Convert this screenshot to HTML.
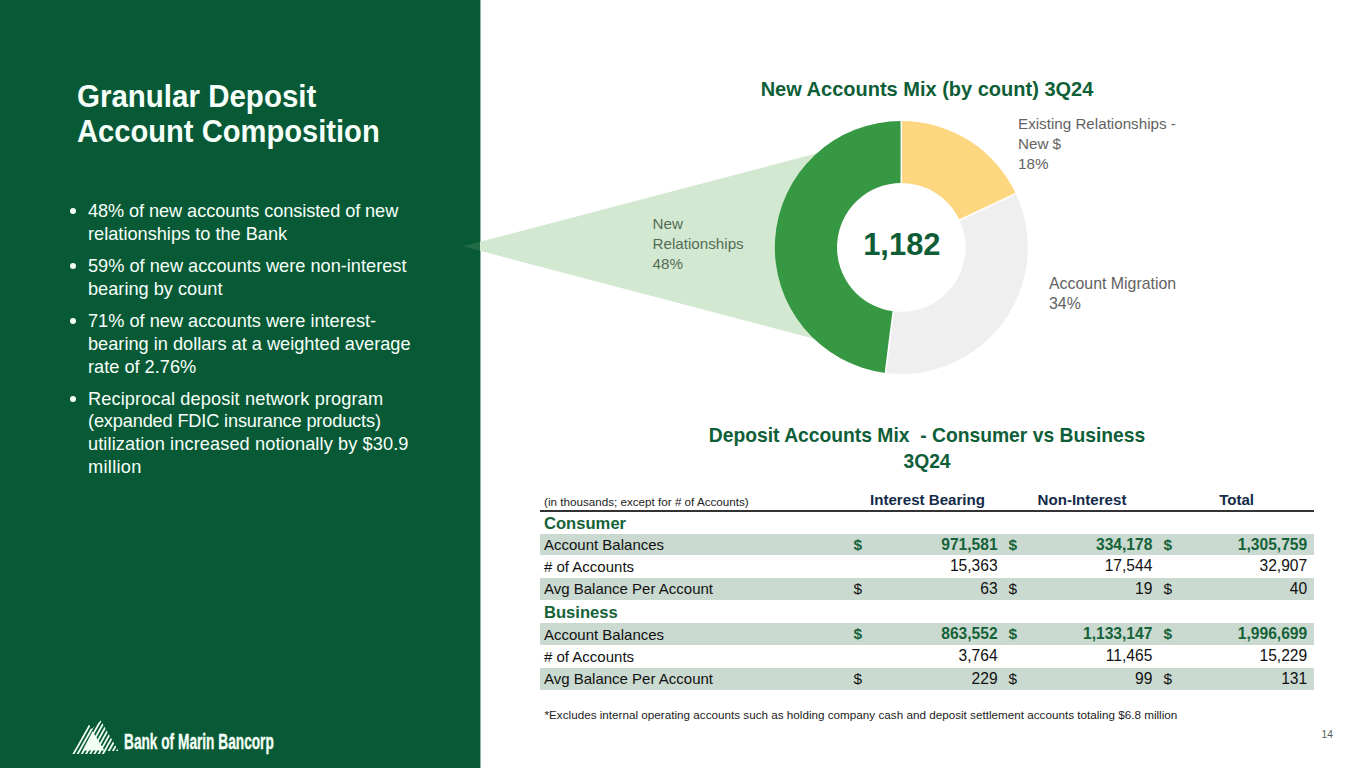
<!DOCTYPE html>
<html><head><meta charset="utf-8"><style>
html,body{margin:0;padding:0;}
body{width:1365px;height:768px;position:relative;overflow:hidden;background:#fff;font-family:"Liberation Sans",sans-serif;}
.t{position:absolute;white-space:nowrap;}
.abs{position:absolute;}
.panel{position:absolute;left:0;top:0;width:480px;height:768px;background:#085A36;}
.dot{position:absolute;width:6px;height:6px;border-radius:50%;background:#F7FFFA;}
.band{position:absolute;left:540px;width:774px;background:#CADAD0;}
.hline{position:absolute;left:540px;width:774px;top:510px;height:2px;background:#333;}
</style></head><body>
<div class="panel"></div><div style="position:absolute;left:480px;top:0;width:1px;height:768px;background:#085A36;opacity:0.45"></div><svg class="abs" width="1365" height="768" viewBox="0 0 1365 768" style="left:0;top:0">
<polygon points="480,241.83 835,148.46 835,344.14 480,250.77" fill="#D3E8D1"/>
<polygon points="463.0,246.3 480,241.83 480,250.77" fill="#D3E8D1" fill-opacity="0.12"/>
<path d="M901.30,120.90 A126.5,126.5 0 0 1 1015.76,193.54 L959.48,220.02 A64.3,64.3 0 0 0 901.30,183.10 Z" fill="#FDD680"/>
<path d="M1015.76,193.54 A126.5,126.5 0 0 1 885.45,372.90 L893.24,311.19 A64.3,64.3 0 0 0 959.48,220.02 Z" fill="#EFEFEF"/>
<path d="M885.45,372.90 A126.5,126.5 0 0 1 901.30,120.90 L901.30,183.10 A64.3,64.3 0 0 0 893.24,311.19 Z" fill="#369843"/>
<line x1="901.30" y1="184.10" x2="901.30" y2="119.90" stroke="#fff" stroke-width="1.5"/><line x1="958.58" y1="220.45" x2="1016.67" y2="193.11" stroke="#fff" stroke-width="1.5"/><line x1="893.37" y1="310.20" x2="885.32" y2="373.89" stroke="#fff" stroke-width="1.5"/>
</svg><div class="band" style="top:533.5px;height:21.5px"></div><div class="band" style="top:578px;height:22px"></div><div class="band" style="top:623px;height:22px"></div><div class="band" style="top:668px;height:21.5px"></div><div class="hline"></div>
<div class="t" style="left:77.00px;top:82.03px;font-size:29.5px;line-height:29.5px;color:#F7FFFA;font-weight:700;transform-origin:0 24.97px;transform:scaleY(1.08);">Granular Deposit</div><div class="t" style="left:77.00px;top:117.92px;font-size:29.15px;line-height:29.15px;color:#F7FFFA;font-weight:700;transform-origin:0 24.68px;transform:scaleY(1.07);">Account Composition</div><div class="dot" style="left:70.30px;top:208.40px"></div><div class="t" style="left:88.00px;top:202.29px;font-size:18.2px;line-height:18.2px;color:#F7FFFA;font-weight:400;letter-spacing:-0.09px;">48% of new accounts consisted of new</div><div class="t" style="left:88.00px;top:225.19px;font-size:18.2px;line-height:18.2px;color:#F7FFFA;font-weight:400;">relationships to the Bank</div><div class="dot" style="left:70.30px;top:263.20px"></div><div class="t" style="left:88.00px;top:257.09px;font-size:18.2px;line-height:18.2px;color:#F7FFFA;font-weight:400;">59% of new accounts were non-interest</div><div class="t" style="left:88.00px;top:279.99px;font-size:18.2px;line-height:18.2px;color:#F7FFFA;font-weight:400;">bearing by count</div><div class="dot" style="left:70.30px;top:318.00px"></div><div class="t" style="left:88.00px;top:311.89px;font-size:18.2px;line-height:18.2px;color:#F7FFFA;font-weight:400;">71% of new accounts were interest-</div><div class="t" style="left:88.00px;top:334.79px;font-size:18.2px;line-height:18.2px;color:#F7FFFA;font-weight:400;">bearing in dollars at a weighted average</div><div class="t" style="left:88.00px;top:357.69px;font-size:18.2px;line-height:18.2px;color:#F7FFFA;font-weight:400;">rate of 2.76%</div><div class="dot" style="left:70.30px;top:395.70px"></div><div class="t" style="left:88.00px;top:389.59px;font-size:18.2px;line-height:18.2px;color:#F7FFFA;font-weight:400;letter-spacing:0.12px;">Reciprocal deposit network program</div><div class="t" style="left:88.00px;top:412.49px;font-size:18.2px;line-height:18.2px;color:#F7FFFA;font-weight:400;letter-spacing:-0.16px;">(expanded FDIC insurance products)</div><div class="t" style="left:88.00px;top:435.39px;font-size:18.2px;line-height:18.2px;color:#F7FFFA;font-weight:400;letter-spacing:0.1px;">utilization increased notionally by $30.9</div><div class="t" style="left:88.00px;top:458.29px;font-size:18.2px;line-height:18.2px;color:#F7FFFA;font-weight:400;letter-spacing:0.3px;">million</div><div class="t" style="left:527.00px;width:800px;text-align:center;top:78.87px;font-size:20px;line-height:20.0px;color:#0E5E37;font-weight:700;transform-origin:0 16.93px;transform:scaleY(1.04);">New Accounts Mix (by count) 3Q24</div><div class="t" style="left:1018.00px;top:115.53px;font-size:15.2px;line-height:15.2px;color:#626262;font-weight:400;">Existing Relationships -</div><div class="t" style="left:1018.00px;top:135.83px;font-size:15.2px;line-height:15.2px;color:#626262;font-weight:400;">New $</div><div class="t" style="left:1018.00px;top:156.43px;font-size:15.2px;line-height:15.2px;color:#626262;font-weight:400;">18%</div><div class="t" style="left:652.50px;top:215.53px;font-size:15.2px;line-height:15.2px;color:#536D54;font-weight:400;">New</div><div class="t" style="left:652.50px;top:235.93px;font-size:15.2px;line-height:15.2px;color:#536D54;font-weight:400;">Relationships</div><div class="t" style="left:652.50px;top:256.43px;font-size:15.2px;line-height:15.2px;color:#536D54;font-weight:400;">48%</div><div class="t" style="left:1049.00px;top:275.54px;font-size:15.9px;line-height:15.9px;color:#626262;font-weight:400;">Account Migration</div><div class="t" style="left:1049.00px;top:296.04px;font-size:15.9px;line-height:15.9px;color:#626262;font-weight:400;">34%</div><div class="t" style="left:863.20px;top:229.54px;font-size:30.9px;line-height:30.9px;color:#0E5D37;font-weight:700;">1,182</div><div class="t" style="left:527.00px;width:800px;text-align:center;top:425.66px;font-size:19.3px;line-height:19.3px;color:#0E5E37;font-weight:700;">Deposit Accounts Mix&nbsp; - Consumer vs Business</div><div class="t" style="left:527.00px;width:800px;text-align:center;top:452.26px;font-size:19.3px;line-height:19.3px;color:#0E5E37;font-weight:700;">3Q24</div><div class="t" style="left:544.00px;top:495.62px;font-size:11.67px;line-height:11.67px;color:#222;font-weight:400;">(in thousands; except for # of Accounts)</div><div class="t" style="left:527.50px;width:800px;text-align:center;top:491.82px;font-size:15.1px;line-height:15.1px;color:#142B4A;font-weight:700;">Interest Bearing</div><div class="t" style="left:682.00px;width:800px;text-align:center;top:491.82px;font-size:15.1px;line-height:15.1px;color:#142B4A;font-weight:700;">Non-Interest</div><div class="t" style="left:836.60px;width:800px;text-align:center;top:491.82px;font-size:15.1px;line-height:15.1px;color:#142B4A;font-weight:700;">Total</div><div class="t" style="left:544.00px;top:515.85px;font-size:16.6px;line-height:16.6px;color:#156239;font-weight:700;">Consumer</div><div class="t" style="left:544.00px;top:605.15px;font-size:16.6px;line-height:16.6px;color:#156239;font-weight:700;">Business</div><div class="t" style="left:544.00px;top:537.10px;font-size:15px;line-height:15.0px;color:#111;font-weight:400;">Account Balances</div><div class="t" style="left:853.50px;top:536.76px;font-size:15.4px;line-height:15.4px;color:#156239;font-weight:700;">$</div><div class="t" style="left:1008.50px;top:536.76px;font-size:15.4px;line-height:15.4px;color:#156239;font-weight:700;">$</div><div class="t" style="left:1163.50px;top:536.76px;font-size:15.4px;line-height:15.4px;color:#156239;font-weight:700;">$</div><div class="t" style="left:597.60px;width:400px;text-align:right;top:536.59px;font-size:15.6px;line-height:15.6px;color:#156239;font-weight:700;">971,581</div><div class="t" style="left:752.40px;width:400px;text-align:right;top:536.59px;font-size:15.6px;line-height:15.6px;color:#156239;font-weight:700;">334,178</div><div class="t" style="left:907.20px;width:400px;text-align:right;top:536.59px;font-size:15.6px;line-height:15.6px;color:#156239;font-weight:700;">1,305,759</div><div class="t" style="left:544.00px;top:559.00px;font-size:15px;line-height:15.0px;color:#111;font-weight:400;"># of Accounts</div><div class="t" style="left:597.60px;width:400px;text-align:right;top:558.49px;font-size:15.6px;line-height:15.6px;color:#111;font-weight:400;">15,363</div><div class="t" style="left:752.40px;width:400px;text-align:right;top:558.49px;font-size:15.6px;line-height:15.6px;color:#111;font-weight:400;">17,544</div><div class="t" style="left:907.20px;width:400px;text-align:right;top:558.49px;font-size:15.6px;line-height:15.6px;color:#111;font-weight:400;">32,907</div><div class="t" style="left:544.00px;top:581.30px;font-size:15px;line-height:15.0px;color:#111;font-weight:400;">Avg Balance Per Account</div><div class="t" style="left:853.50px;top:580.96px;font-size:15.4px;line-height:15.4px;color:#111;font-weight:400;">$</div><div class="t" style="left:1008.50px;top:580.96px;font-size:15.4px;line-height:15.4px;color:#111;font-weight:400;">$</div><div class="t" style="left:1163.50px;top:580.96px;font-size:15.4px;line-height:15.4px;color:#111;font-weight:400;">$</div><div class="t" style="left:597.60px;width:400px;text-align:right;top:580.79px;font-size:15.6px;line-height:15.6px;color:#111;font-weight:400;">63</div><div class="t" style="left:752.40px;width:400px;text-align:right;top:580.79px;font-size:15.6px;line-height:15.6px;color:#111;font-weight:400;">19</div><div class="t" style="left:907.20px;width:400px;text-align:right;top:580.79px;font-size:15.6px;line-height:15.6px;color:#111;font-weight:400;">40</div><div class="t" style="left:544.00px;top:626.50px;font-size:15px;line-height:15.0px;color:#111;font-weight:400;">Account Balances</div><div class="t" style="left:853.50px;top:626.16px;font-size:15.4px;line-height:15.4px;color:#156239;font-weight:700;">$</div><div class="t" style="left:1008.50px;top:626.16px;font-size:15.4px;line-height:15.4px;color:#156239;font-weight:700;">$</div><div class="t" style="left:1163.50px;top:626.16px;font-size:15.4px;line-height:15.4px;color:#156239;font-weight:700;">$</div><div class="t" style="left:597.60px;width:400px;text-align:right;top:625.99px;font-size:15.6px;line-height:15.6px;color:#156239;font-weight:700;">863,552</div><div class="t" style="left:752.40px;width:400px;text-align:right;top:625.99px;font-size:15.6px;line-height:15.6px;color:#156239;font-weight:700;">1,133,147</div><div class="t" style="left:907.20px;width:400px;text-align:right;top:625.99px;font-size:15.6px;line-height:15.6px;color:#156239;font-weight:700;">1,996,699</div><div class="t" style="left:544.00px;top:648.90px;font-size:15px;line-height:15.0px;color:#111;font-weight:400;"># of Accounts</div><div class="t" style="left:597.60px;width:400px;text-align:right;top:648.39px;font-size:15.6px;line-height:15.6px;color:#111;font-weight:400;">3,764</div><div class="t" style="left:752.40px;width:400px;text-align:right;top:648.39px;font-size:15.6px;line-height:15.6px;color:#111;font-weight:400;">11,465</div><div class="t" style="left:907.20px;width:400px;text-align:right;top:648.39px;font-size:15.6px;line-height:15.6px;color:#111;font-weight:400;">15,229</div><div class="t" style="left:544.00px;top:671.20px;font-size:15px;line-height:15.0px;color:#111;font-weight:400;">Avg Balance Per Account</div><div class="t" style="left:853.50px;top:670.86px;font-size:15.4px;line-height:15.4px;color:#111;font-weight:400;">$</div><div class="t" style="left:1008.50px;top:670.86px;font-size:15.4px;line-height:15.4px;color:#111;font-weight:400;">$</div><div class="t" style="left:1163.50px;top:670.86px;font-size:15.4px;line-height:15.4px;color:#111;font-weight:400;">$</div><div class="t" style="left:597.60px;width:400px;text-align:right;top:670.69px;font-size:15.6px;line-height:15.6px;color:#111;font-weight:400;">229</div><div class="t" style="left:752.40px;width:400px;text-align:right;top:670.69px;font-size:15.6px;line-height:15.6px;color:#111;font-weight:400;">99</div><div class="t" style="left:907.20px;width:400px;text-align:right;top:670.69px;font-size:15.6px;line-height:15.6px;color:#111;font-weight:400;">131</div><div class="t" style="left:544.50px;top:709.10px;font-size:11.7px;line-height:11.7px;color:#222;font-weight:400;">*Excludes internal operating accounts such as holding company cash and deposit settlement accounts totaling $6.8 million</div><div class="t" style="left:1321.60px;top:729.97px;font-size:10.2px;line-height:10.2px;color:#595959;font-weight:400;">14</div><div class="t" style="left:124px;top:730px;font-size:22px;line-height:24px;font-weight:700;color:#F4FFF7;transform-origin:0 0;transform:scaleX(0.622);-webkit-text-stroke:0.35px #F4FFF7">Bank of Marin Bancorp</div><svg class="abs" style="left:60px;top:710px" width="70" height="50" viewBox="60 710 70 50">
<defs><clipPath id="mt"><polygon points="72,754 88.8,724.2 91.8,729 100.8,720.4 118.5,751 106,751 105,754"/></clipPath></defs>
<g clip-path="url(#mt)" stroke="#F2FFF5" stroke-width="1.8"><line x1="63.90" y1="756" x2="86.50" y2="716"/><line x1="68.10" y1="756" x2="90.70" y2="716"/><line x1="72.30" y1="756" x2="94.90" y2="716"/><line x1="76.50" y1="756" x2="99.10" y2="716"/><line x1="80.70" y1="756" x2="103.30" y2="716"/><line x1="84.90" y1="756" x2="107.50" y2="716"/><line x1="89.10" y1="756" x2="111.70" y2="716"/><line x1="93.30" y1="756" x2="115.90" y2="716"/><line x1="97.50" y1="756" x2="120.10" y2="716"/><line x1="101.70" y1="756" x2="124.30" y2="716"/><line x1="105.90" y1="756" x2="128.50" y2="716"/><line x1="110.10" y1="756" x2="132.70" y2="716"/><line x1="114.30" y1="756" x2="136.90" y2="716"/><line x1="118.50" y1="756" x2="141.10" y2="716"/><line x1="122.70" y1="756" x2="145.30" y2="716"/><line x1="126.90" y1="756" x2="149.50" y2="716"/></g>
<polygon points="82.6,750.5 92.6,731.2 104.5,750.5" fill="#F2FFF5"/>
</svg>
</body></html>
